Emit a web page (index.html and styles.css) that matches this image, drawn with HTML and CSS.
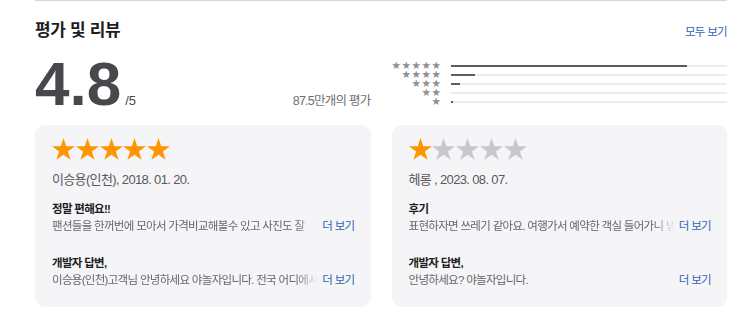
FILE: index.html
```html
<!DOCTYPE html>
<html lang="ko">
  <head>
    <meta charset="utf-8">
    <link rel="stylesheet" href="styles.css">
  </head>
  <body>
    <main class="ratings">
      <header class="ratings-head">
        <h2 class="ratings-title">평가 및 리뷰</h2>
        <a class="link" href="#">모두 보기</a>
      </header>

      <section class="summary">
        <div class="score">
          <div class="score-value"><span class="avg">4.8</span><span class="out-of">/5</span></div>
          <p class="count">87.5만개의 평가</p>
        </div>
        <div class="histogram">
          <div class="hist-row"><span class="hist-stars">★★★★★</span><span class="bar"><span class="fill" style="width:85.6%"></span></span></div>
          <div class="hist-row"><span class="hist-stars">★★★★</span><span class="bar"><span class="fill" style="width:9%"></span></span></div>
          <div class="hist-row"><span class="hist-stars">★★★</span><span class="bar"><span class="fill" style="width:3.3%"></span></span></div>
          <div class="hist-row"><span class="hist-stars">★★</span><span class="bar"><span class="fill" style="width:0%"></span></span></div>
          <div class="hist-row"><span class="hist-stars">★</span><span class="bar"><span class="fill" style="width:0.8%"></span></span></div>
        </div>
      </section>

      <section class="reviews">
        <article class="card">
          <div class="stars">
            <svg viewBox="0 0 24 23"><polygon class="on" points="12,0 14.83,8.71 23.98,8.71 16.57,14.09 19.41,22.79 12,17.41 4.59,22.79 7.43,14.09 0.02,8.71 9.17,8.71"/></svg>
            <svg viewBox="0 0 24 23"><polygon class="on" points="12,0 14.83,8.71 23.98,8.71 16.57,14.09 19.41,22.79 12,17.41 4.59,22.79 7.43,14.09 0.02,8.71 9.17,8.71"/></svg>
            <svg viewBox="0 0 24 23"><polygon class="on" points="12,0 14.83,8.71 23.98,8.71 16.57,14.09 19.41,22.79 12,17.41 4.59,22.79 7.43,14.09 0.02,8.71 9.17,8.71"/></svg>
            <svg viewBox="0 0 24 23"><polygon class="on" points="12,0 14.83,8.71 23.98,8.71 16.57,14.09 19.41,22.79 12,17.41 4.59,22.79 7.43,14.09 0.02,8.71 9.17,8.71"/></svg>
            <svg viewBox="0 0 24 23"><polygon class="on" points="12,0 14.83,8.71 23.98,8.71 16.57,14.09 19.41,22.79 12,17.41 4.59,22.79 7.43,14.09 0.02,8.71 9.17,8.71"/></svg>
          </div>
          <p class="meta">이승용(인천), 2018. 01. 20.</p>
          <div class="block">
            <h3 class="block-title">정말 편해요!!</h3>
            <div class="line"><span class="clip">팬션들을 한꺼번에 모아서 가격비교해볼수 있고 사진도 잘</span><a class="link" href="#">더 보기</a></div>
          </div>
          <div class="block">
            <h3 class="block-title">개발자 답변,</h3>
            <div class="line"><span class="clip">이승용(인천)고객님 안녕하세요 야놀자입니다. 전국 어디에서나</span><a class="link" href="#">더 보기</a></div>
          </div>
        </article>

        <article class="card">
          <div class="stars">
            <svg viewBox="0 0 24 23"><polygon class="on" points="12,0 14.83,8.71 23.98,8.71 16.57,14.09 19.41,22.79 12,17.41 4.59,22.79 7.43,14.09 0.02,8.71 9.17,8.71"/></svg>
            <svg viewBox="0 0 24 23"><polygon points="12,0 14.83,8.71 23.98,8.71 16.57,14.09 19.41,22.79 12,17.41 4.59,22.79 7.43,14.09 0.02,8.71 9.17,8.71"/></svg>
            <svg viewBox="0 0 24 23"><polygon points="12,0 14.83,8.71 23.98,8.71 16.57,14.09 19.41,22.79 12,17.41 4.59,22.79 7.43,14.09 0.02,8.71 9.17,8.71"/></svg>
            <svg viewBox="0 0 24 23"><polygon points="12,0 14.83,8.71 23.98,8.71 16.57,14.09 19.41,22.79 12,17.41 4.59,22.79 7.43,14.09 0.02,8.71 9.17,8.71"/></svg>
            <svg viewBox="0 0 24 23"><polygon points="12,0 14.83,8.71 23.98,8.71 16.57,14.09 19.41,22.79 12,17.41 4.59,22.79 7.43,14.09 0.02,8.71 9.17,8.71"/></svg>
          </div>
          <p class="meta">헤롱 , 2023. 08. 07.</p>
          <div class="block">
            <h3 class="block-title">후기</h3>
            <div class="line"><span class="clip">표현하자면 쓰레기 같아요. 여행가서 예약한 객실 들어가니 냄새가</span><a class="link" href="#">더 보기</a></div>
          </div>
          <div class="block">
            <h3 class="block-title">개발자 답변,</h3>
            <div class="line"><span class="clip short">안녕하세요? 야놀자입니다.</span><a class="link" href="#">더 보기</a></div>
          </div>
        </article>
      </section>
    </main>
  </body>
</html>
```

FILE: styles.css
```css
body { margin: 0; background: #fff; color: #1d1d1f;
       font-family: "Liberation Sans", "Noto Sans CJK KR", sans-serif; }

.ratings { width: 692px; margin-left: 35px; border-top: 1px solid #d6d6db; }

.link { color: #2f64b5; text-decoration: none; font-size: 11.5px; letter-spacing: -0.06em; }

/* header */
.ratings-head { display: flex; justify-content: space-between; align-items: baseline;
                margin-top: 18px; height: 24px; }
.ratings-title { margin: 0; font-size: 17px; line-height: 24px; font-weight: 700; letter-spacing: -0.02em; }

/* summary */
.summary { display: grid; grid-template-columns: minmax(0, 1fr) minmax(0, 1fr); column-gap: 21px; margin-top: 10px; }
.score { display: flex; justify-content: space-between; align-items: baseline; }
.score-value { line-height: 1; }
.avg { font-size: 62px; line-height: 62px; font-weight: 700; color: #48484c; }
.out-of { font-size: 13px; line-height: 1; color: #48484c; margin-left: 4px; }
.count { margin: 0; font-size: 12.5px; line-height: 1; color: #6e6e73; letter-spacing: -0.06em; }

.histogram { margin-top: 8px; }
.hist-row { display: flex; align-items: center; height: 9px; }
.hist-stars { width: 50px; text-align: right; font-family: "DejaVu Sans", sans-serif;
              font-size: 10.5px; line-height: 9px; letter-spacing: 0.6px; color: #8e8e93; }
.bar { flex: 1; height: 2px; margin-left: 9px; background: #ececf0; }
.fill { display: block; height: 2px; background: #5b5b60; }

/* review cards */
.reviews { display: grid; grid-template-columns: minmax(0, 1fr) minmax(0, 1fr); column-gap: 21px; margin-top: 10px; }
.card { background: #f5f5f7; border-radius: 9px; padding: 12px 16px 18px 17px; }
.stars { display: flex; gap: 0.8px; height: 24px; align-items: center; }
.stars svg { width: 23px; height: 22px; }
.stars polygon { fill: #c7c7cc; }
.stars polygon.on { fill: #ff9500; }

.meta { margin: 10px 0 0; font-size: 13px; line-height: 17px; color: #58585d; letter-spacing: -0.05em; }
.block { margin-top: 13px; }
.block + .block { margin-top: 20px; }
.block-title { margin: 0; font-size: 11.5px; line-height: 17px; font-weight: 700; letter-spacing: -0.06em; }
.line { display: flex; align-items: baseline; font-size: 11.5px; line-height: 17px; }
.clip { flex: 1; min-width: 0; overflow: hidden; white-space: nowrap; color: #66666b; letter-spacing: -0.06em;
        -webkit-mask-image: linear-gradient(to right, #000 calc(100% - 22px), transparent);
        mask-image: linear-gradient(to right, #000 calc(100% - 22px), transparent); }
.clip.short { -webkit-mask-image: none; mask-image: none; }
.line .link { margin-left: 4px; }
```
